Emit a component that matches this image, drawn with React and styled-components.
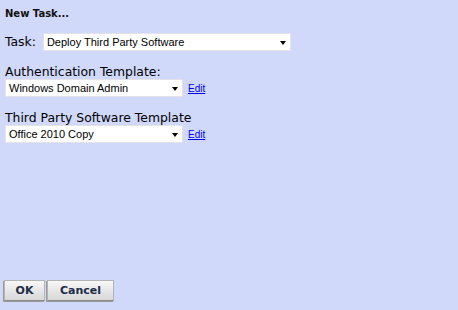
import React from "react"
import styled, { createGlobalStyle } from "styled-components"

const Global = createGlobalStyle`
    html, body {
        margin: 0;
        padding: 0;
        background: #d1d9fa;
    }
`

const Page = styled.div`
    display: flex;
    flex-direction: column;
    height: 310px;
    box-sizing: border-box;
    padding: 7px 0 9px 5px;
    font-family: "DejaVu Sans", Verdana, sans-serif;
    color: #000;
`

const Heading = styled.div`
    font-weight: bold;
    font-size: 10px;
    line-height: 13px;
    color: #111;
`

const Row = styled.div`
    display: flex;
    align-items: center;
    gap: ${p => p.gap || 5}px;
    margin-top: ${p => p.top || 0}px;
`

const Label = styled.label`
    display: block;
    font-size: 12.4px;
    line-height: 14px;
    margin-top: ${p => p.top || 0}px;
`

const Select = styled.div`
    position: relative;
    box-sizing: border-box;
    width: ${p => p.width}px;
    height: 18px;
    background: #fff;
    border: 1px solid #e2e2e8;
    padding-left: 3px;
    font-family: "Liberation Sans", Arial, sans-serif;
    font-size: 11px;
    line-height: 16px;
    color: #000;

    &::after {
        content: "";
        position: absolute;
        right: 4px;
        top: 7px;
        border-left: 3.5px solid transparent;
        border-right: 3.5px solid transparent;
        border-top: 4px solid #000;
    }
`

const EditLink = styled.a`
    font-family: "Liberation Sans", Arial, sans-serif;
    font-size: 10px;
    color: #0000ee;
    text-decoration: underline;
    cursor: pointer;
`

const Buttons = styled.div`
    margin-top: auto;
    margin-left: -1px;
    display: flex;
    gap: 2px;
`

const Button = styled.button`
    box-sizing: border-box;
    width: ${p => p.width}px;
    height: 21px;
    padding: 0;
    border: 1px solid #b4b4b4;
    border-bottom-color: #8c8c8c;
    background: linear-gradient(#f8f8f8, #e4e4e4 60%, #d8d8d8);
    font-family: "DejaVu Sans", Verdana, sans-serif;
    font-weight: bold;
    font-size: 11px;
    color: #1b2b48;
    box-shadow: -1px 1px 0 #9a9a9a;
    cursor: pointer;
`

function App() {
    return (
        <Page>
            <Global />
            <Heading>New Task...</Heading>
            <Row top={13} gap={7}>
                <Label>Task:</Label>
                <Select width={248}>Deploy Third Party Software</Select>
            </Row>
            <Label top={14}>Authentication Template:</Label>
            <Row>
                <Select width={178}>Windows Domain Admin</Select>
                <EditLink>Edit</EditLink>
            </Row>
            <Label top={14}>Third Party Software Template</Label>
            <Row>
                <Select width={178}>Office 2010 Copy</Select>
                <EditLink>Edit</EditLink>
            </Row>
            <Buttons>
                <Button width={41}>OK</Button>
                <Button width={67}>Cancel</Button>
            </Buttons>
        </Page>
    )
}

export default App
